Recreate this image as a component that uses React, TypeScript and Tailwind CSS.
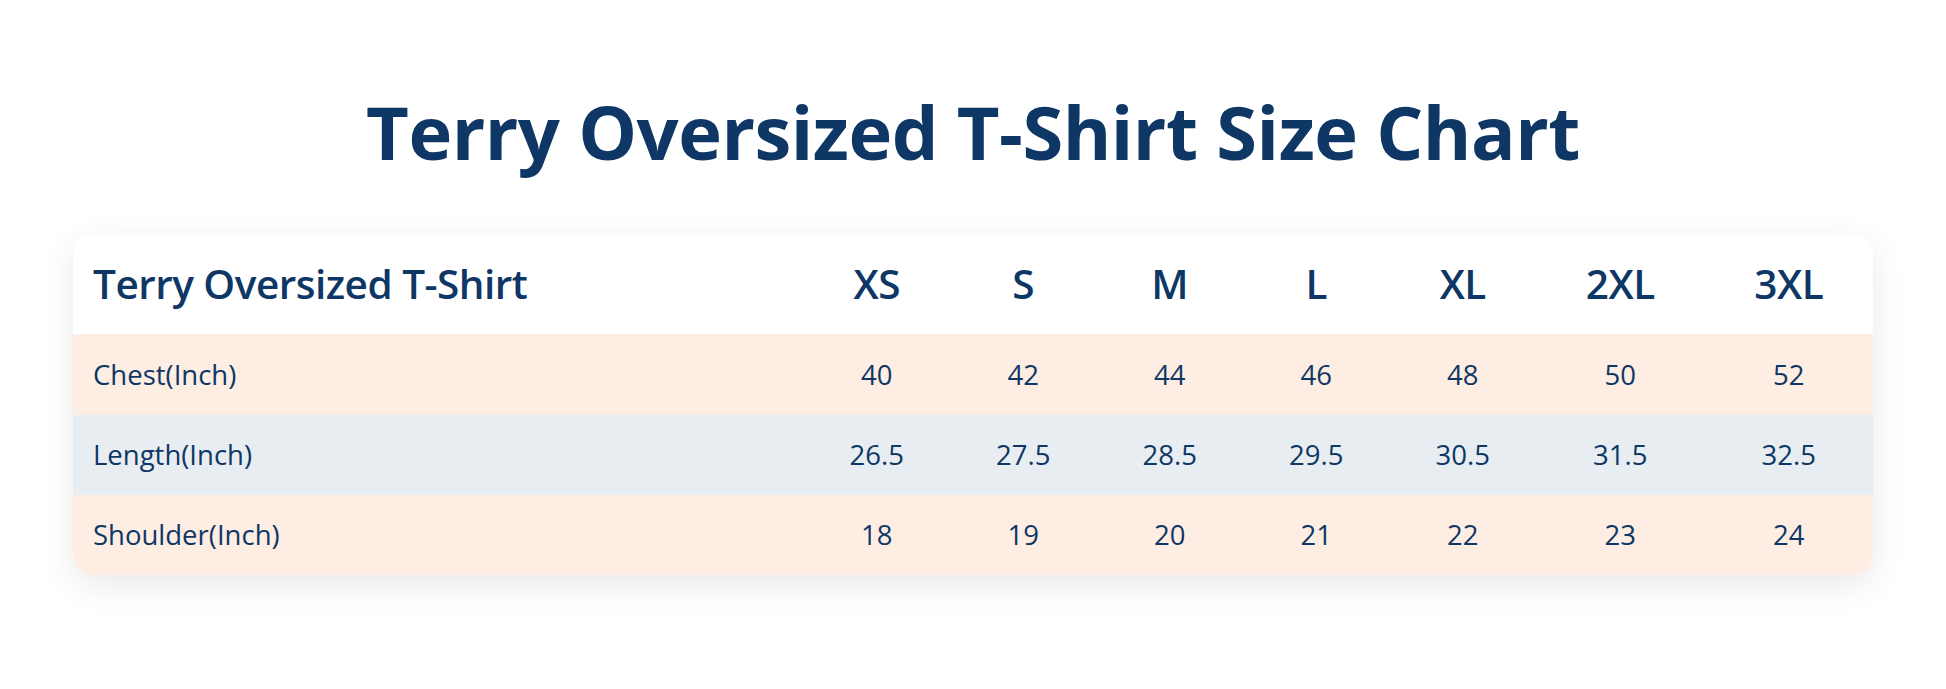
import React from "react";

const sizes = ["XS", "S", "M", "L", "XL", "2XL", "3XL"];
const rows = [
  { label: "Chest(Inch)", values: ["40", "42", "44", "46", "48", "50", "52"], bg: "bg-[#feede3]", h: "h-[81px]" },
  { label: "Length(Inch)", values: ["26.5", "27.5", "28.5", "29.5", "30.5", "31.5", "32.5"], bg: "bg-[#e8edf1]", h: "h-[80px]" },
  { label: "Shoulder(Inch)", values: ["18", "19", "20", "21", "22", "23", "24"], bg: "bg-[#feede3]", h: "h-[80px]" },
];

const grid = "grid grid-cols-[1fr_146.5px_146.5px_146.5px_146.5px_146.5px_168.5px_168.5px]";

export default function App() {
  return (
    <div className="w-[1946px] h-[689px] bg-white overflow-hidden text-[#0e3765]" style={{ fontFamily: '"Open Sans", "Noto Sans", sans-serif' }}>
      <h1 className="pt-[95px] text-center text-[74px] leading-none font-bold tracking-[-0.5px]">
        Terry Oversized T-Shirt Size Chart
      </h1>
      <div className="mx-[73px] mt-[66px] rounded-[20px] overflow-hidden bg-white shadow-[0_10px_35px_rgba(0,0,0,0.09)]">
        <div className={`${grid} h-[99px] items-center bg-white`}>
          <div className="pl-[20px] text-[40.5px] leading-none font-semibold tracking-[-0.5px]">Terry Oversized T-Shirt</div>
          {sizes.map((s) => (
            <div key={s} className="text-center text-[40.5px] leading-none font-semibold tracking-[-0.5px]">{s}</div>
          ))}
        </div>
        {rows.map((r) => (
          <div key={r.label} className={`${grid} ${r.h} ${r.bg} items-center`}>
            <div className="pl-[20px] text-[27.5px] leading-none">{r.label}</div>
            {r.values.map((v, i) => (
              <div key={i} className="text-center text-[27.5px] leading-none">{v}</div>
            ))}
          </div>
        ))}
      </div>
    </div>
  );
}
